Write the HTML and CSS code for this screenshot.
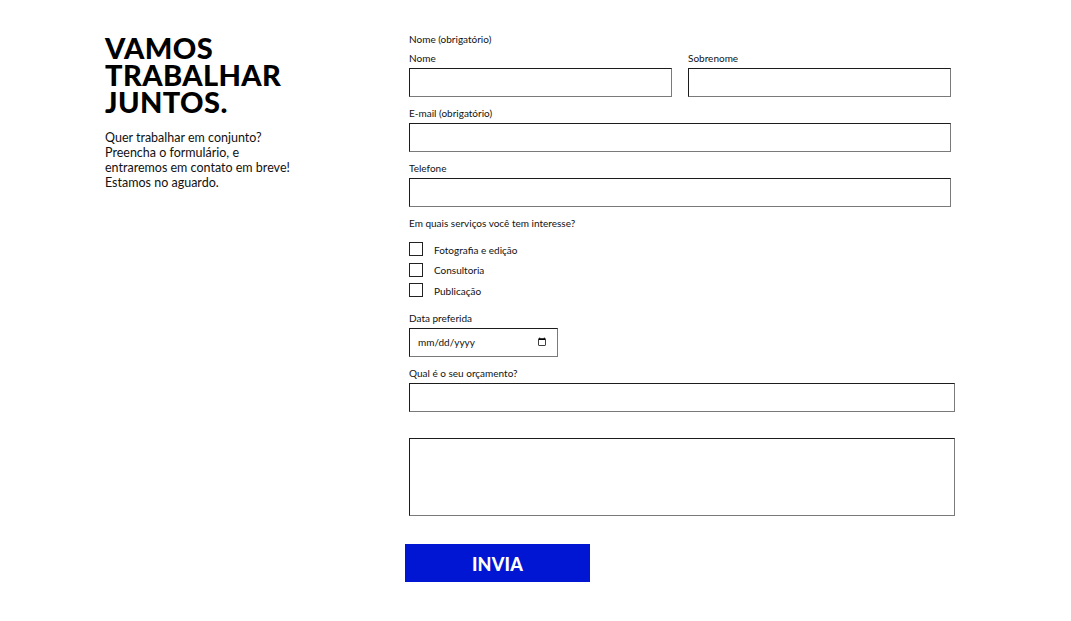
FILE: index.html
```html
<!DOCTYPE html>
<html lang="pt">
<head>
<meta charset="utf-8">
<title>Vamos trabalhar juntos</title>
<link rel="stylesheet" href="styles.css">
</head>
<body>
<main class="page">
  <section class="intro">
    <h1 class="title">VAMOS<br>TRABALHAR<br>JUNTOS.</h1>
    <p class="lead">Quer trabalhar em conjunto?<br>Preencha o formulário, e<br>entraremos em contato em breve!<br>Estamos no aguardo.</p>
  </section>
  <form class="form">
    <div class="field">
      <span class="label">Nome (obrigatório)</span>
      <div class="name-row">
        <label class="sub">
          <span class="label">Nome</span>
          <input class="input" type="text">
        </label>
        <label class="sub">
          <span class="label">Sobrenome</span>
          <input class="input" type="text">
        </label>
      </div>
    </div>
    <label class="field">
      <span class="label">E-mail (obrigatório)</span>
      <input class="input narrow" type="email">
    </label>
    <label class="field">
      <span class="label">Telefone</span>
      <input class="input narrow" type="tel">
    </label>
    <div class="field">
      <span class="label">Em quais serviços você tem interesse?</span>
      <div class="checks">
        <label class="check"><input class="box" type="checkbox"><span>Fotografia e edição</span></label>
        <label class="check"><input class="box" type="checkbox"><span>Consultoria</span></label>
        <label class="check"><input class="box" type="checkbox"><span>Publicação</span></label>
      </div>
    </div>
    <label class="field">
      <span class="label">Data preferida</span>
      <input class="input date" type="date">
    </label>
    <label class="field">
      <span class="label">Qual é o seu orçamento?</span>
      <input class="input wide" type="text">
    </label>
    <label class="field">
      <span class="label"></span>
      <textarea class="input area"></textarea>
    </label>
    <button class="send" type="button">INVIA</button>
  </form>
</main>
</body>
</html>
```

FILE: styles.css
```css
* { box-sizing: border-box; }
html, body { margin: 0; background: #fff; }
body {
  font-family: "Lato", "Noto Sans", sans-serif;
  color: #111;
}
.page {
  display: grid;
  grid-template-columns: 304px 546px;
  padding-left: 105px;
  padding-top: 33px;
}
.title {
  margin: 0;
  font-size: 29px;
  line-height: 27px;
  font-weight: 900;
  letter-spacing: 0.4px;
  color: #000;
  padding-top: 1px;
}
.lead {
  margin: 15px 0 0;
  font-size: 12.5px;
  line-height: 15px;
  color: #111;
}
.form {
  display: flex;
  flex-direction: column;
}
.field {
  display: flex;
  flex-direction: column;
  margin-bottom: 10px;
}
.label {
  display: block;
  font-size: 10px;
  line-height: 12px;
  height: 12px;
  margin-bottom: 4px;
  white-space: nowrap;
}
.name-row {
  display: flex;
  gap: 16px;
  margin-top: 3px;
  width: 542px;
}
.sub {
  display: flex;
  flex-direction: column;
  flex: 1;
}
.input {
  display: block;
  height: 29px;
  border: 1px solid;
  border-color: #1c1c1c #7a7a7a #7a7a7a #1c1c1c;
  border-radius: 0;
  background: #fff;
  font-family: inherit;
  font-size: 10px;
  margin: 0;
  padding: 0 8px;
  outline: none;
}
.narrow { width: 542px; }
.wide { width: 546px; }
.date { width: 149px; color: #111; }
.date::-webkit-datetime-edit-fields-wrapper,
.date::-webkit-datetime-edit-month-field,
.date::-webkit-datetime-edit-day-field,
.date::-webkit-datetime-edit-year-field,
.date::-webkit-datetime-edit-text { padding: 0; }
.area { width: 546px; height: 78px; resize: none; }
.checks {
  display: flex;
  flex-direction: column;
  padding-top: 6px;
  padding-bottom: 1px;
}
.check {
  display: flex;
  align-items: center;
  height: 20.5px;
  font-size: 10px;
}
.box {
  appearance: none;
  -webkit-appearance: none;
  width: 14px;
  height: 14px;
  margin: 0 11px 0 0;
  border: 1px solid #222;
  border-radius: 0;
  background: #fff;
}
.check span { padding-top: 1px; }
.send {
  align-self: flex-start;
  margin: 18px 0 0 -4px;
  width: 185px;
  height: 38px;
  border: 0;
  background: #0016d2;
  color: #fff;
  font-family: inherit;
  font-size: 18px;
  font-weight: 900;
  letter-spacing: 0.2px;
  padding: 2px 0 0;
}
```
